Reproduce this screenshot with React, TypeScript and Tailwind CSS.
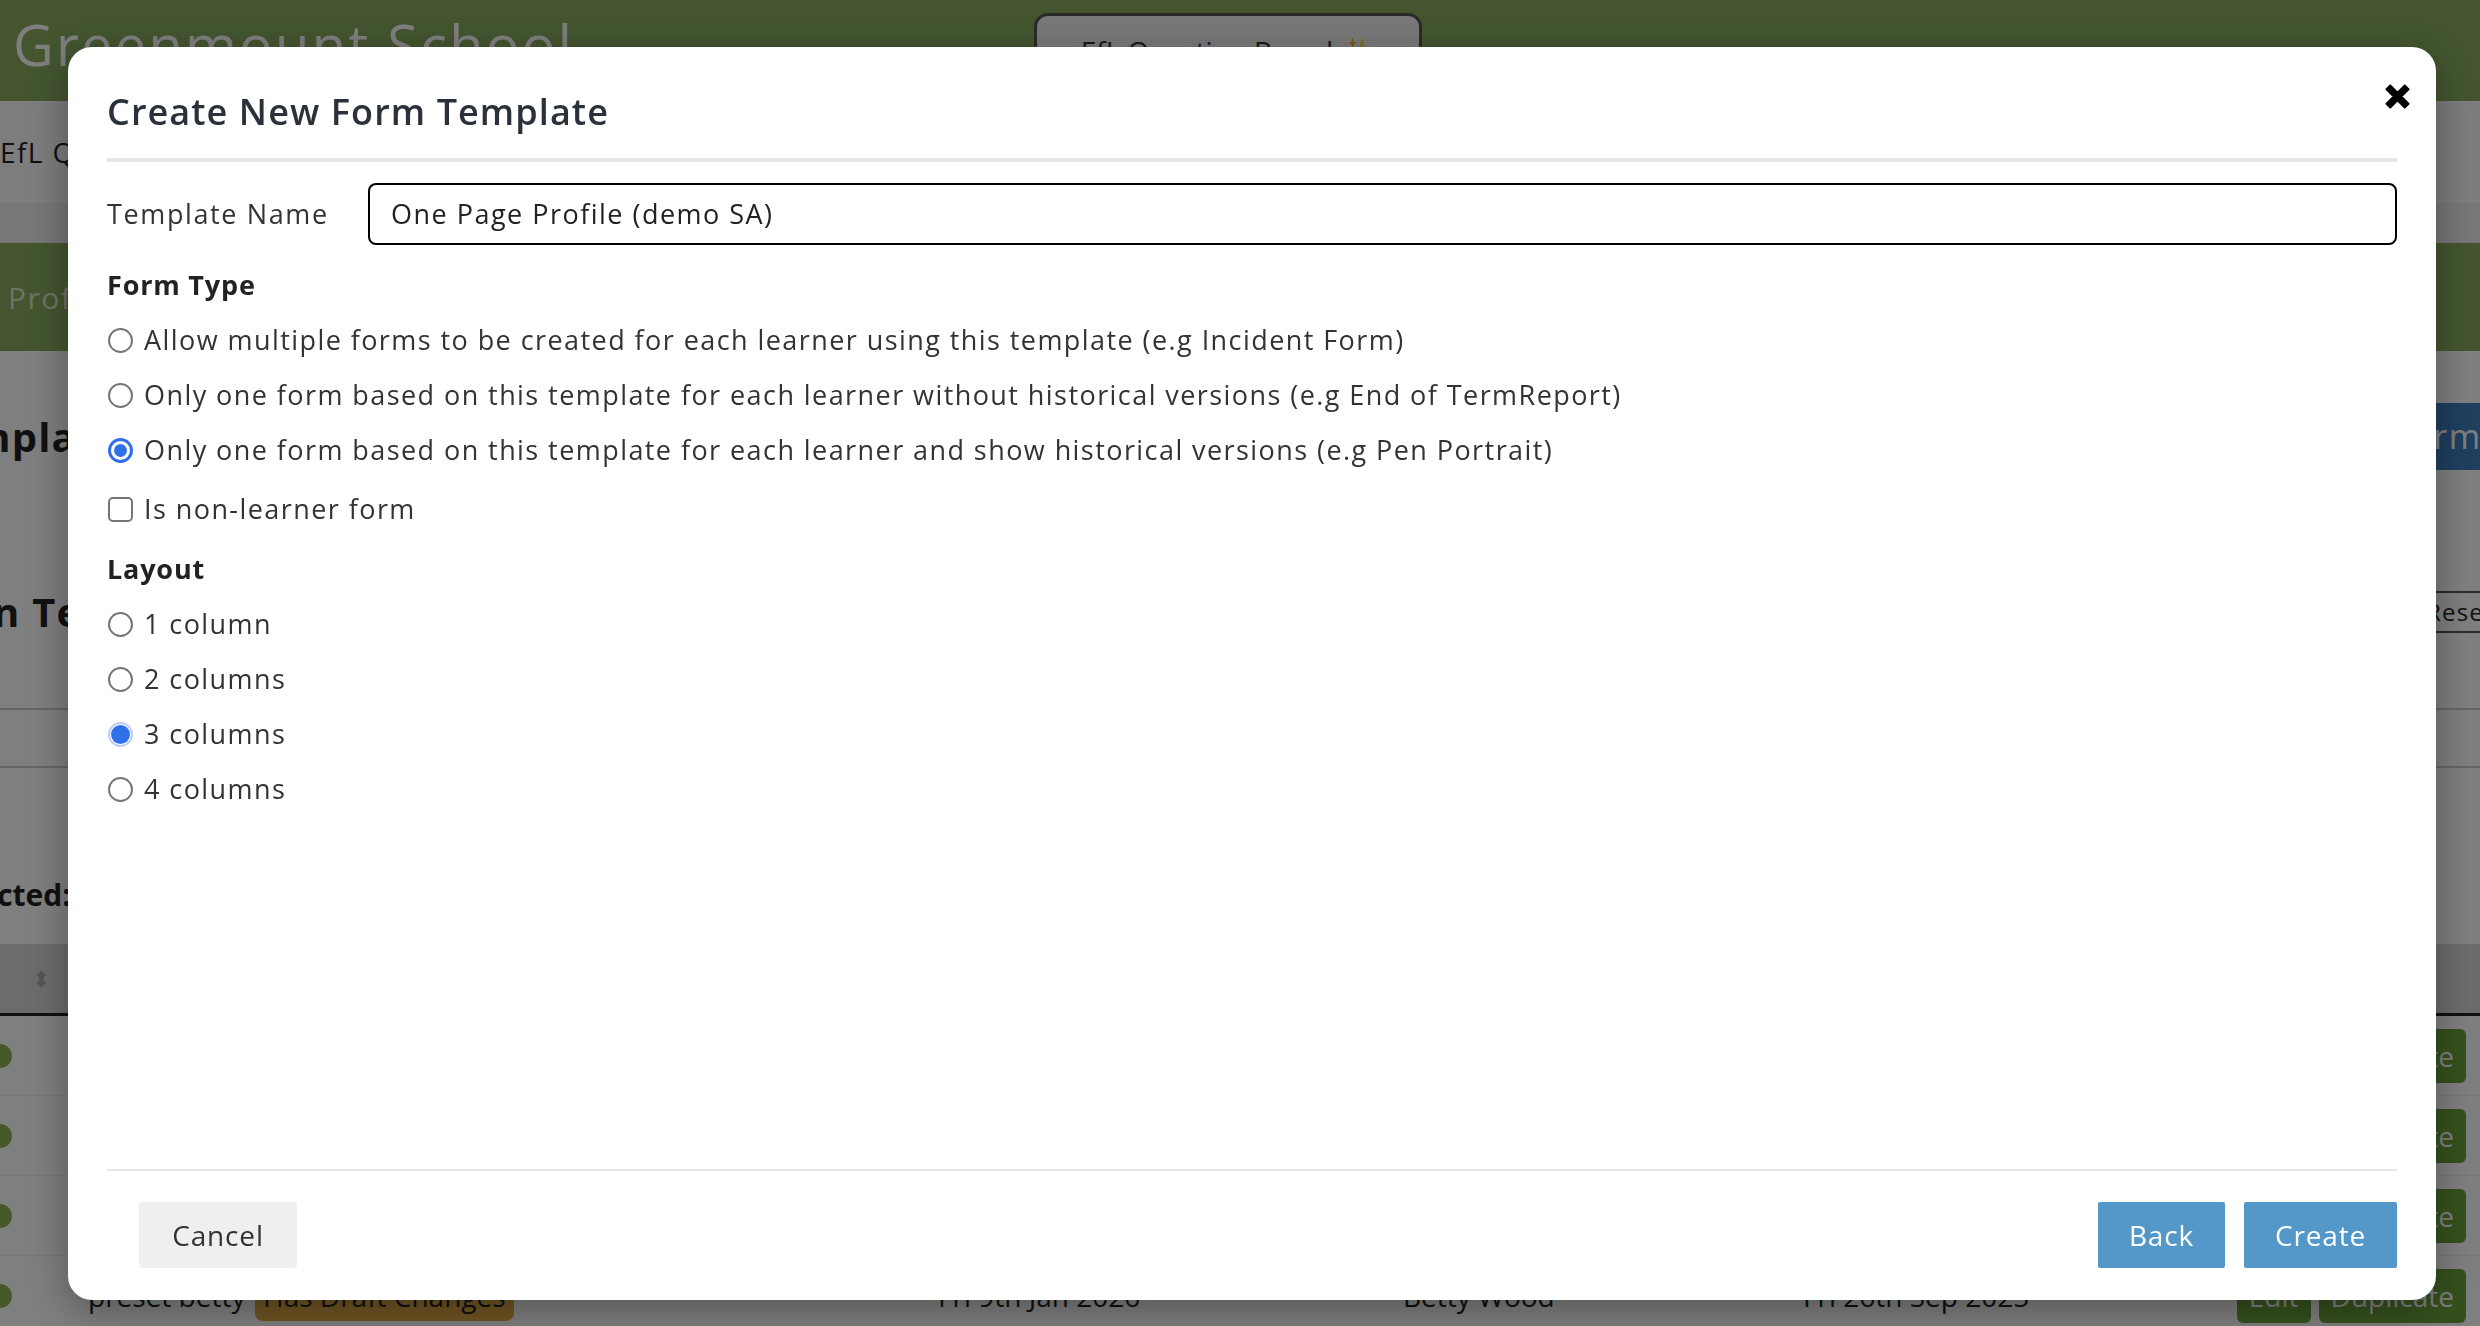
import React from "react";

const font = { fontFamily: "'Open Sans', 'Liberation Sans', sans-serif" };

const Radio = ({ checked, solid }: { checked?: boolean; solid?: boolean }) => {
  if (solid) {
    return (
      <span className="flex h-[25px] w-[25px] shrink-0 items-center justify-center rounded-full border-[2px] border-[#b9cdf7]">
        <span className="h-[19px] w-[19px] rounded-full bg-[#2f6fea]" />
      </span>
    );
  }
  if (checked) {
    return (
      <span className="flex h-[25px] w-[25px] shrink-0 items-center justify-center rounded-full border-[3px] border-[#2f6fea] bg-white">
        <span className="h-[13px] w-[13px] rounded-full bg-[#2f6fea]" />
      </span>
    );
  }
  return <span className="h-[25px] w-[25px] shrink-0 rounded-full border-[2px] border-[#767676] bg-white" />;
};

const Option = ({ label, checked, solid }: { label: string; checked?: boolean; solid?: boolean }) => (
  <label className="flex h-[36px] items-center gap-[11px] pl-[1px]">
    <Radio checked={checked} solid={solid} />
    <span className="text-[27px] font-medium leading-[36px] tracking-[0.053em] text-[#333]">{label}</span>
  </label>
);

const rows = [
  { name: "Pen Portrait", draft: false },
  { name: "Incident", draft: false },
  { name: "Review", draft: false },
  { name: "preset betty", draft: true },
];

const Background = () => (
  <div className="flex h-screen w-full flex-col overflow-hidden bg-white text-[#222]" style={font}>
    <div className="flex h-[101px] shrink-0 items-start bg-[#88ab60]">
      <div className="pl-[13px] pt-[8px] text-[56px] leading-[72px] tracking-[0.04em] text-white">Greenmount School</div>
      <div className="ml-[460px] mt-[13px] flex h-[90px] w-[388px] items-start justify-center rounded-[14px] border-[3px] border-[#555] bg-[#f3f3f3] pt-[14px] text-[28px] font-medium text-[#333]">
        EfL Question Board ✨
      </div>
    </div>
    <div className="flex h-[102px] shrink-0 items-center bg-[#fbfbfb] text-[28px] tracking-[0.05em]">EfL Questions</div>
    <div className="h-[40px] shrink-0 bg-[#efefef]" />
    <div className="flex h-[108px] shrink-0 items-center bg-[#88ab60] pl-[8px] text-[30px] tracking-[0.05em] text-white">
      <span className="opacity-70">Profiles</span>
    </div>
    <div className="flex items-center justify-between pt-[52px]">
      <div className="-ml-[78px] text-[40px] font-bold tracking-[0.03em]">Templates</div>
      <div className="mr-[-30px] rounded-[6px] bg-[#3d7fbf] px-[28px] py-[8px] text-[34px] tracking-[0.05em] text-white">New Form</div>
    </div>
    <div className="flex items-center justify-between pt-[112px]">
      <div className="-ml-[130px] text-[40px] font-bold tracking-[0.03em]">Hidden Templates</div>
      <div className="mr-[-60px] h-[42px] w-[120px] border-[2px] border-[#555] px-[4px] text-[24px] leading-[38px] tracking-[0.05em]">Reset</div>
    </div>
    <div className="mt-[66px] h-[60px] shrink-0 border-y-[2px] border-[#ccc]" />
    <div className="flex items-center pt-[104px]">
      <div className="-ml-[64px] text-[30px] font-bold">Selected:</div>
    </div>
    <div className="mt-[27px] flex h-[72px] shrink-0 items-center border-b-[3px] border-[#222] bg-[#d9d9d9] pl-[32px] text-[22px] text-[#aaa]">⬍</div>
    {rows.map((r, i) => (
      <div key={i} className="flex h-[80px] shrink-0 items-center border-b border-[#eee] text-[28px]">
        <span className="-ml-[12px] h-[24px] w-[24px] shrink-0 rounded-full bg-[#8fb04f]" />
        <span className="ml-[76px] w-[167px] shrink-0">{r.name}</span>
        <span className="w-[683px] shrink-0">
          {r.draft && <span className="rounded-[8px] bg-[#e2aa48] px-[8px] py-[6px]">Has Draft Changes</span>}
        </span>
        <span className="w-[465px] shrink-0">Fri 9th Jan 2026</span>
        <span className="w-[400px] shrink-0">Betty Wood</span>
        <span className="shrink-0">Fri 26th Sep 2025</span>
        <span className="ml-auto mr-[14px] flex gap-[8px]">
          <span className="rounded-[6px] bg-[#6ba13a] px-[12px] py-[6px] text-white">Edit</span>
          <span className="rounded-[6px] bg-[#6ba13a] px-[12px] py-[6px] text-white">Duplicate</span>
        </span>
      </div>
    ))}
  </div>
);

export default function App() {
  return (
    <div className="relative h-screen w-full overflow-hidden">
      <Background />
      <div className="fixed inset-0 flex bg-black/50 pb-[26px] pl-[68px] pr-[44px] pt-[47px]" style={font}>
        <div className="relative flex flex-1 flex-col rounded-[24px] bg-white px-[39px] shadow-[0_10px_40px_rgba(0,0,0,0.35)]">
          <button className="absolute right-[24px] top-[35px] flex h-[29px] w-[29px] items-center justify-center">
            <svg viewBox="0 0 24 24" className="h-[29px] w-[29px]">
              <path d="M2.5 6 L6 2.5 L12 8.5 L18 2.5 L21.5 6 L15.5 12 L21.5 18 L18 21.5 L12 15.5 L6 21.5 L2.5 18 L8.5 12 Z" fill="#000" strokeLinejoin="round" stroke="#000" strokeWidth="1" />
            </svg>
          </button>
          <div className="pb-[21px] pt-[40px]">
            <h2 className="text-[36px] font-semibold leading-[50px] tracking-[0.03em] text-[#2b313b]">Create New Form Template</h2>
          </div>
          <div className="h-[4px] bg-[#e5e5e5]" />
          <div className="flex flex-1 flex-col">
            <div className="mt-[21px] flex items-center">
              <span className="w-[261px] shrink-0 text-[27px] font-medium tracking-[0.06em] text-[#333]">Template Name</span>
              <div className="flex h-[62px] flex-1 items-center rounded-[8px] border-[2px] border-black px-[21px] text-[27px] font-medium tracking-[0.055em] text-[#222]">
                One Page Profile (demo SA)
              </div>
            </div>
            <div className="mt-[22px] flex flex-col gap-[19px]">
              <div className="text-[27px] font-bold leading-[36px] tracking-[0.03em] text-[#222]">Form Type</div>
              <Option label="Allow multiple forms to be created for each learner using this template (e.g Incident Form)" />
              <Option label="Only one form based on this template for each learner without historical versions (e.g End of TermReport)" />
              <Option label="Only one form based on this template for each learner and show historical versions (e.g Pen Portrait)" checked />
              <label className="mt-[4px] flex h-[36px] items-center gap-[11px] pl-[1px]">
                <span className="h-[25px] w-[25px] shrink-0 rounded-[5px] border-[2px] border-[#767676] bg-white" />
                <span className="text-[27px] font-medium leading-[36px] tracking-[0.053em] text-[#333]">Is non-learner form</span>
              </label>
              <div className="mt-[5px] text-[27px] font-bold leading-[36px] tracking-[0.03em] text-[#222]">Layout</div>
              <Option label="1 column" />
              <Option label="2 columns" />
              <Option label="3 columns" solid />
              <Option label="4 columns" />
            </div>
          </div>
          <div className="h-[2px] bg-[#e5e5e5]" />
          <div className="flex items-center pb-[32px] pt-[31px]">
            <button className="ml-[32px] h-[66px] w-[158px] rounded-[4px] bg-[#efefef] text-[28px] font-medium tracking-[0.03em] text-[#333]">Cancel</button>
            <button className="ml-auto h-[66px] w-[127px] rounded-[2px] bg-[#5498c9] text-[28px] font-medium tracking-[0.03em] text-white">Back</button>
            <button className="ml-[19px] h-[66px] w-[153px] rounded-[2px] bg-[#5498c9] text-[28px] font-medium tracking-[0.03em] text-white">Create</button>
          </div>
        </div>
      </div>
    </div>
  );
}
